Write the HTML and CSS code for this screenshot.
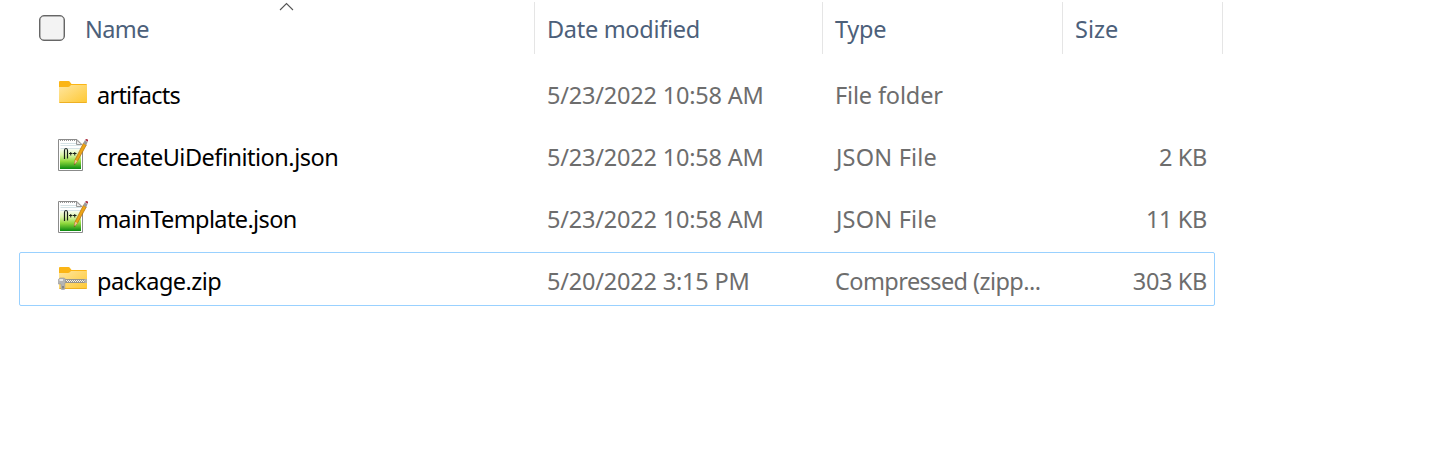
FILE: index.html
```html
<!DOCTYPE html>
<html lang="en">
<head>
<meta charset="utf-8">
<title>Files</title>
<link rel="stylesheet" href="styles.css">
</head>
<body>
<svg class="defs" width="0" height="0" aria-hidden="true">
  <defs>
    <linearGradient id="gold" x1="0" y1="0" x2="1" y2="1"><stop offset="0" stop-color="#ffe6a0"/><stop offset="1" stop-color="#fec832"/></linearGradient>
    <linearGradient id="green" x1="0" y1="0" x2="0" y2="1"><stop offset="0" stop-color="#f8fdf0"/><stop offset=".3" stop-color="#dcf5a8"/><stop offset=".62" stop-color="#8fd83c"/><stop offset="1" stop-color="#0a8a10"/></linearGradient>
    <symbol id="folder" viewBox="0 0 30 24">
      <path d="M1 2Q1 1 2 1H10.500Q11.500 1 12 2L13.500 4H28Q29 4 29 5V10H1Z" fill="#fbb516"/>
      <path d="M1 7H10Q11.300 7 12 6L13 5H29V22.200Q29 23 28 23H2Q1 23 1 22.200Z" fill="url(#gold)"/>
      <path d="M1.500 22.500H28.500" stroke="#eeb022"/>
    </symbol>
    <symbol id="note" viewBox="0 0 31 34">
      <path d="M.5 1.500H19L24.500 7.500V32.500H.5Z" fill="#fff" stroke="#8b8b8b"/>
      <path d="M2 2.500H18" stroke="#999" stroke-dasharray="1 1"/>
      <path d="M2.500 5.500H18M2.500 7.500H23M2.500 10.500H23" stroke="#d5e3e6"/>
      <path d="M2 11H23V31H2Z" fill="url(#green)"/>
      <path d="M18.500 2V6.500H24Z" fill="#eee" stroke="#999"/>
      <path d="M6.500 21V12.500Q6.500 10.500 8 10.500Q9.500 10.500 9.500 12.500V20.500" fill="none" stroke="#182018" stroke-width="1.200"/>
      <path d="M11 15.500H14.500M12.750 14V17.500M15 15.500H18.500M16.750 14V17.500" stroke="#182018"/>
      <path d="M25.500 5L28.300 7L19.500 23L16.300 26.800L17 22Z" fill="#eba516" stroke="#b56c0c" stroke-width=".7"/>
      <path d="M17 22L19.500 23L16.300 26.800Z" fill="#e8c29a"/>
      <path d="M16.500 25.500L17.500 26L16.300 27Z" fill="#333"/>
      <path d="M26.800 2.300L29.500 4L28.300 7.200L25.200 5.300Z" fill="#9a9a9a"/>
      <path d="M27 2Q28 .8 29.500 1.200Q30.500 2 29.800 3.800Z" fill="#a8283c"/>
    </symbol>
    <symbol id="zip" viewBox="0 0 30 24">
      <use href="#folder" width="30" height="24"/>
      <path d="M6 13H29V17H6Z" fill="#98948c"/>
      <path d="M8 14.500H27" stroke="#f6f3ea" stroke-dasharray="1 1"/>
      <path d="M9 15.500H27" stroke="#f6f3ea" stroke-dasharray="1 1"/>
      <path d="M26.500 13H29V17H26.500Z" fill="#b5b1a8"/>
      <path d="M.3 13.500L2 12H6L7.500 13V17H6.800V22.500Q6.800 23.500 6 23.500H4Q3 23.500 3 22.500V18H.3Z" fill="#b4b4b4" stroke="#999" stroke-width=".6"/>
      <path d="M1.500 13H5V15H1.500Z" fill="#e6e6e6"/>
      <path d="M5 20V22.500" stroke="#666" stroke-width="1.200"/>
    </symbol>
  </defs>
</svg>
<main class="list">
  <header class="head">
    <div class="col col-name"><span class="check"></span><span class="t-name">Name</span>
      <svg class="sort" width="15" height="9" viewBox="0 0 15 9"><path d="M1 8L7.500 1.500L14 8" fill="none" stroke="#555" stroke-width="1.100"/></svg>
    </div>
    <div class="col"><span class="t-date">Date modified</span></div>
    <div class="col"><span class="t-type">Type</span></div>
    <div class="col"><span class="t-size">Size</span></div>
  </header>
  <div class="row"><div class="file"><svg class="icon folder"><use href="#folder"/></svg><span class="n1">artifacts</span></div><span class="date">5/23/2022 10:58 AM</span><span class="type folder-type">File folder</span><span class="size"></span></div>
  <div class="row"><div class="file"><svg class="icon note"><use href="#note"/></svg><span class="n2">createUiDefinition.json</span></div><span class="date">5/23/2022 10:58 AM</span><span class="type json-type">JSON File</span><span class="size">2 KB</span></div>
  <div class="row"><div class="file"><svg class="icon note"><use href="#note"/></svg><span class="n3">mainTemplate.json</span></div><span class="date">5/23/2022 10:58 AM</span><span class="type json-type">JSON File</span><span class="size">11 KB</span></div>
  <div class="row focused"><div class="file"><svg class="icon zip"><use href="#zip"/></svg><span class="n4">package.zip</span></div><span class="date pm">5/20/2022 3:15 PM</span><span class="type zip-type">Compressed (zipp...</span><span class="size">303 KB</span></div>
</main>
</body>
</html>
```
FILE: styles.css
```css
* { box-sizing: border-box; }
body { margin: 0; background: #fff; font: 23.5px/32px "Noto Sans", "Open Sans", sans-serif; color: #6d6d6d; }
.defs { display: block; height: 0; }
.list { width: 1223px; padding-top: 2px; }
.head { display: grid; grid-template-columns: 535px 288px 240px 160px; height: 52px; margin-bottom: 12px; color: #4c607a; }
.col { position: relative; display: flex; align-items: center; padding: 1px 0 0 12px; border-right: 1px solid #e5e5e5; white-space: nowrap; }
.col-name { padding-left: 39px; gap: 20px; }
.check { width: 26px; height: 26px; margin-top: -1px; border: 1px solid #666; border-radius: 5px; background: #f3f3f3; box-shadow: inset 0 0 0 .5px #777; }
.sort { position: absolute; left: 279px; top: 0; }
.row { display: grid; grid-template-columns: 526px 288px 240px 132px; align-items: center; width: 1196px; height: 54px; margin: 0 0 8px 19px; padding: 3px 8px 0 1px; border: 1px solid transparent; border-radius: 2px; white-space: nowrap; }
.focused { border-color: #99d1ff; }
.file { display: flex; align-items: center; padding-left: 37px; gap: 9px; color: #000; }
.icon { flex: none; width: 30px; height: 24px; margin-top: -5px; }
.note { width: 31px; height: 34px; margin: -4px -1px 0 0; }
.size { text-align: right; letter-spacing: -.35px; }
.t-name { letter-spacing: -.6px; }
.t-date { letter-spacing: -.3px; }
.t-type { letter-spacing: -.25px; }
.n1 { letter-spacing: -.75px; }
.n2 { letter-spacing: -.5px; }
.n3 { letter-spacing: -.62px; }
.n4 { letter-spacing: -.55px; }
.date { letter-spacing: -.2px; }
.folder-type { letter-spacing: -.15px; }
.json-type { padding-left: 1px; letter-spacing: .2px; }
.zip-type { letter-spacing: -.57px; }
```
